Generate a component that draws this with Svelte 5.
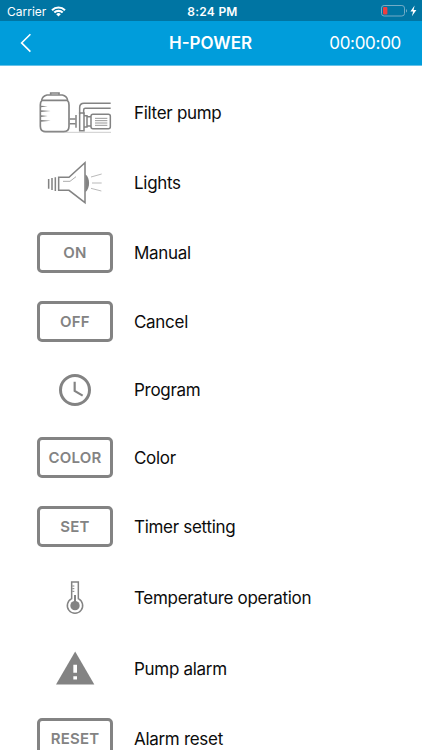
<script lang="ts">
  let title = 'H-POWER';
  let timer = '00:00:00';

  const items = [
    { icon: 'pump', label: 'Filter pump' },
    { icon: 'light', label: 'Lights' },
    { button: 'ON', label: 'Manual' },
    { button: 'OFF', label: 'Cancel' },
    { icon: 'clock', label: 'Program' },
    { button: 'COLOR', label: 'Color' },
    { button: 'SET', label: 'Timer setting' },
    { icon: 'thermometer', label: 'Temperature operation' },
    { icon: 'alarm', label: 'Pump alarm' },
    { button: 'RESET', label: 'Alarm reset' }
  ];
</script>

<div class="screen">
  <div class="status">
    <div class="carrier">
      <span>Carrier</span>
      <svg width="15" height="11" viewBox="0 0 15 11" fill="none" stroke="#fff" stroke-width="2.1">
        <path d="M1 4.2a9.3 9.3 0 0 1 13 0M3.3 6.6a6 6 0 0 1 8.4 0" />
        <path d="M7.5 10.4 5.2 8.2a3.3 3.3 0 0 1 4.6 0z" fill="#fff" stroke="none" />
      </svg>
    </div>
    <div class="time">8:24 PM</div>
    <div class="power">
      <svg width="37" height="12" viewBox="0 0 37 12">
        <rect x="0.5" y="0.5" width="23" height="10.5" rx="2.6" fill="none" stroke="#73acc6" />
        <rect x="2" y="2" width="4.4" height="7.5" rx="1" fill="#ee3e40" />
        <path d="M25 4v3.6c1.4-.5 1.4-3.1 0-3.6z" fill="#73acc6" />
        <path d="M33.6.6 29.4 6.5h2.7l-1.2 4.8 4.5-6.2h-2.8z" fill="#fff" />
      </svg>
    </div>
  </div>

  <header>
    <button class="back" aria-label="Back">
      <svg width="12" height="20" viewBox="0 0 12 20" fill="none" stroke="#fff" stroke-width="1.6">
        <path d="M10.4 1.2 1.6 9.9l8.8 8.7" />
      </svg>
    </button>
    <h1>{title}</h1>
    <span class="timer">{timer}</span>
  </header>

  <ul>
    {#each items as item}
      <li>
        <div class="icon">
          {#if item.button}
            <span class="key">{item.button}</span>
          {:else if item.icon === 'pump'}
            <svg viewBox="0 -6 270 180" fill="none" stroke="#838383" stroke-width="4.5">
              <path d="M36 46q-5 4-5 14v64q0 16 16 16h54q16 0 16-16V60q0-10-5-14z" stroke-width="5" />
              <path d="M35 46q2-13 16-16h46q14 3 16 16" />
              <path d="M62 29v-5h25v5" stroke-width="5" />
              <path d="M33 62l20 2-20 3zM33 76l29 2-29 3zM33 91l20 2-20 3zM33 105l29 2-29 3z" fill="#838383" stroke="none" />
              <path d="M119 102h18M119 116h18" />
              <path d="M149 88V68q0-13 13-13h80M161 88V75q0-5 5-5h76" />
              <path d="M138 90v38M149 84h13v53h-13z" />
              <path d="M162 92h9v34h-9M171 95h12M171 123h12" />
              <rect x="183" y="88" width="58" height="43" rx="6" />
              <path d="M195 100h37M195 107h37M195 114h37M195 121h37" stroke-width="2.5" />
              <path d="M40 142h203" stroke="#b5b5b5" stroke-width="2" />
            </svg>
          {:else if item.icon === 'light'}
            <svg viewBox="0 9 270 180" fill="none" stroke="#838383" stroke-width="4.6">
              <path d="M86 82h31l48-44v120l-48-37H86z" />
              <path d="M56 87v29M66 84v36M76 82v41" />
              <path d="M99 94h21l18-14" stroke-width="2" />
              <path d="M166 73c15 10 15 43 0 54z" fill="#838383" stroke="none" />
              <path d="m183 81 32-9M186 99h29M183 115l31 8" stroke="#a0a0a0" stroke-width="2.2" />
            </svg>
          {:else if item.icon === 'clock'}
            <svg viewBox="0 -15 270 180" fill="none" stroke="#838383">
              <circle cx="135" cy="75" r="43.5" stroke-width="9" />
              <path d="M134 50v28l24 14" stroke-width="6.5" />
            </svg>
          {:else if item.icon === 'thermometer'}
            <svg viewBox="0 -6 270 180" fill="none" stroke="#838383" stroke-width="4.5">
              <path d="M125 86V36h20v50a23 23 0 1 1-20 0z" />
              <circle cx="135" cy="107" r="14" fill="#838383" stroke="none" />
              <path d="M135 75v30" stroke-width="6" />
              <path d="M127 48h6M127 56h6M127 64h6" stroke-width="3" />
            </svg>
          {:else}
            <svg viewBox="0 -4.5 270 180" fill="#838383">
              <path d="M135.500 33 193 132H78z" />
              <path d="M130 73h11v24h-11zM130 107h11v10h-11z" fill="#fff" />
            </svg>
          {/if}
        </div>
        <span class="label">{item.label}</span>
      </li>
    {/each}
  </ul>
</div>

<style>
  :global(body) {
    margin: 0;
    background: #fff;
  }

  .screen {
    height: 750px;
    overflow: hidden;
    background: #fff;
    font-family: Inter, "Liberation Sans", sans-serif;
  }

  .status {
    display: grid;
    grid-template-columns: 1fr auto 1fr;
    align-items: center;
    box-sizing: border-box;
    height: 21px;
    padding: 1px 4px 0 7px;
    background: #0075a3;
    color: #fff;
    font-size: 12px;
  }

  .carrier {
    display: flex;
    align-items: center;
    gap: 5px;
  }

  .time {
    font-weight: 600;
    letter-spacing: 0.25px;
  }

  .power {
    display: flex;
    justify-content: flex-end;
  }

  header {
    display: grid;
    grid-template-columns: 1fr auto 1fr;
    align-items: center;
    box-sizing: border-box;
    height: 45px;
    padding: 0 21px 0 20px;
    border-bottom: 1px solid #66c2e8;
    background: #009ddb;
    color: #fff;
  }

  .back {
    display: flex;
    padding: 0;
    border: none;
    background: none;
  }

  h1 {
    margin: 0;
    font-size: 17px;
    font-weight: 600;
  }

  .timer {
    justify-self: end;
    font-size: 17px;
    letter-spacing: -0.3px;
  }

  ul {
    display: grid;
    grid-template-rows: 70px 70px 70px 68px 68px 68px 70px 72px 69px 71px;
    margin: 0;
    padding: 12px 0 0 30px;
    list-style: none;
  }

  li {
    display: flex;
    align-items: center;
    gap: 14px;
  }

  .icon {
    display: flex;
    justify-content: center;
    width: 90px;
  }

  .icon svg {
    width: 90px;
    height: 60px;
  }

  .key {
    display: flex;
    align-items: center;
    justify-content: center;
    box-sizing: border-box;
    width: 76px;
    height: 41px;
    margin-bottom: 1px;
    border: 3px solid #838383;
    border-radius: 5px;
    color: #838383;
    font-size: 15px;
    font-weight: 600;
    letter-spacing: 0.2px;
  }

  .label {
    color: #0c0c0c;
    font-size: 17px;
    letter-spacing: -0.3px;
  }
</style>
